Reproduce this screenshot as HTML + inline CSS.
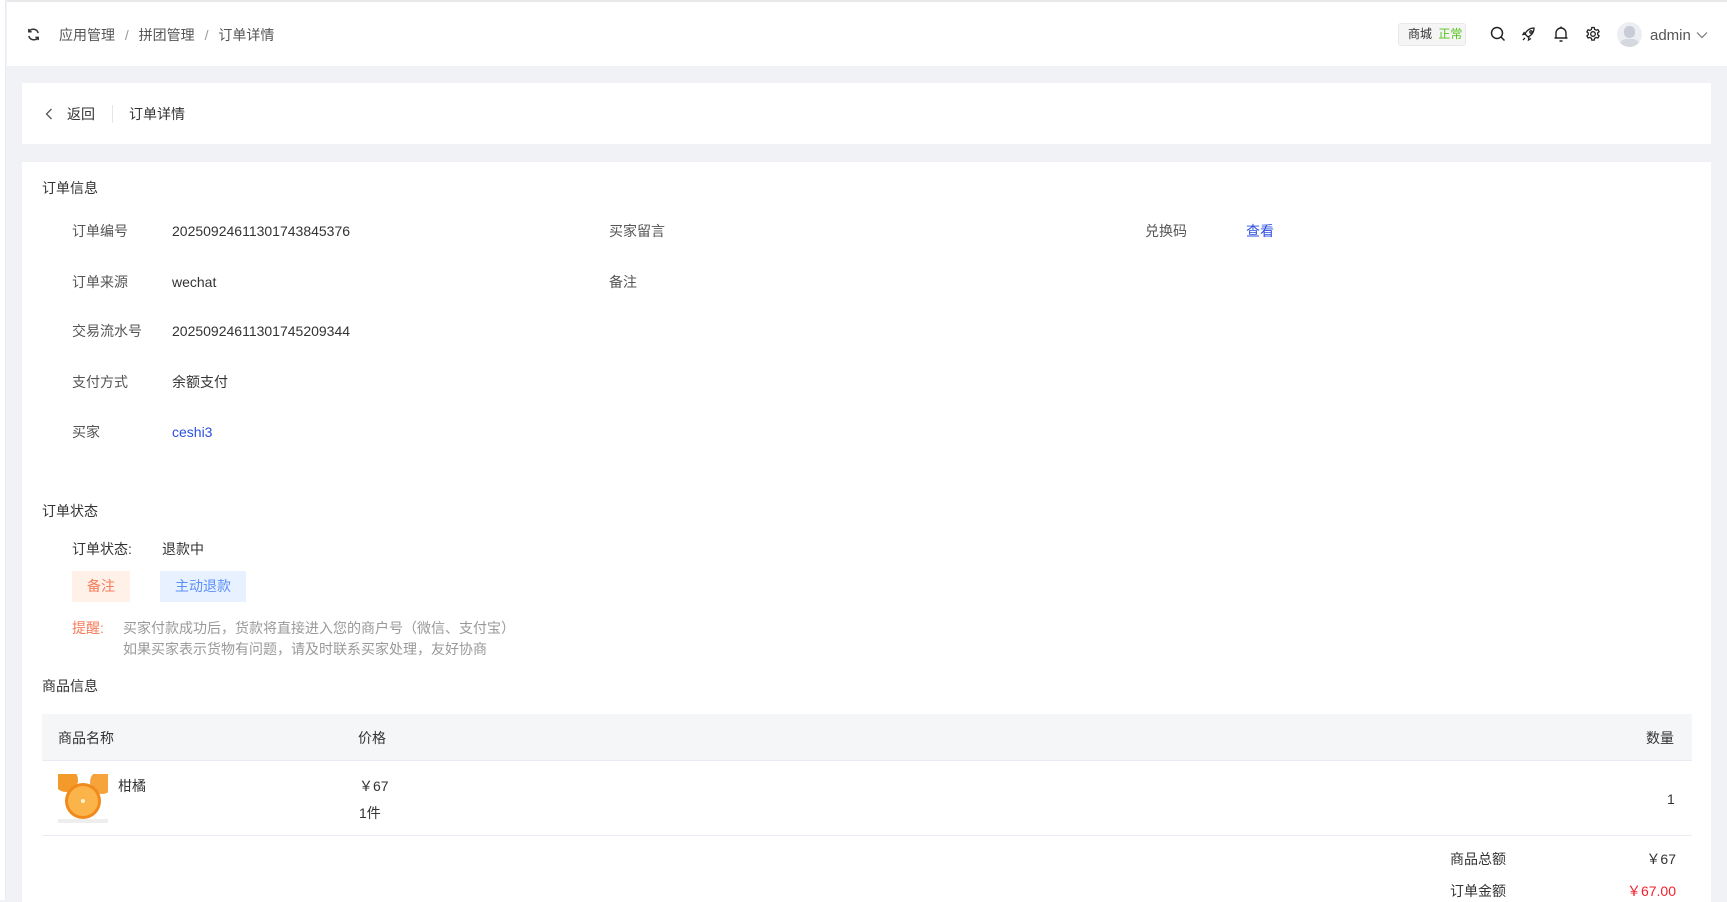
<!DOCTYPE html>
<html><head><meta charset="utf-8">
<style>
*{margin:0;padding:0;box-sizing:border-box}
body{width:1727px;height:900px;overflow:hidden;background:#f0f2f5;font-family:"Liberation Sans","Noto Sans CJK SC",sans-serif;font-size:14px;color:#333;position:relative}
.a{position:absolute;white-space:nowrap;line-height:1}
.leftstrip{position:absolute;left:0;top:0;width:6px;height:900px;background:#fff;border-right:1px solid #e6ebf5}
.top{position:absolute;left:7px;top:0;width:1720px;height:66px;background:#fff;border-top:2px solid #e8e8e8}
.p1{position:absolute;left:22px;top:83px;width:1689px;height:61px;background:#fff}
.p2{position:absolute;left:22px;top:162px;width:1689px;height:740px;background:#fff}
.lbl{color:#555}
.blue{color:#2b4fe0}
.m{position:absolute;left:0;top:1px;width:1727px;height:900px}
</style></head><body>
<div class="leftstrip"></div>
<div class="top"></div>
<svg class="a" style="left:26px;top:27px" width="15" height="15" viewBox="0 0 16 16" fill="none" stroke="#333" stroke-width="1.6"><path d="M13 6.5A5.5 5.5 0 0 0 3 5"/><path d="M3 2v3h3"/><path d="M3 9.5A5.5 5.5 0 0 0 13 11"/><path d="M13 14v-3h-3"/></svg>
<div class="a" style="left:59px;top:28px;color:#555">应用管理 <span style="color:#999;margin:0 6px">/</span> 拼团管理 <span style="color:#999;margin:0 6px">/</span> 订单详情</div>

<div class="a" style="left:1398px;top:23px;width:68px;height:23px;background:#f5f5f5;border:1px solid #e8e8e8;border-radius:3px;font-size:12px;line-height:21px;padding-left:9px">商城 <span style="color:#52c41a;margin-left:3px">正常</span></div>
<svg class="a" style="left:1490px;top:26px" width="16" height="16" viewBox="0 0 16 16" fill="none" stroke="#222" stroke-width="1.5"><circle cx="7" cy="7" r="5.5"/><path d="M11 11l3.5 3.5"/></svg>
<svg class="a" style="left:1521px;top:26px" width="16" height="16" viewBox="0 0 16 16" fill="none" stroke="#222" stroke-width="1.3"><path d="M6 10l-2-2c2-4 5-6 9-6 0 4-2 7-6 9z"/><circle cx="10" cy="6" r="1.2"/><path d="M5 8l-3 .5 1.5-2.5M8 11l-.5 3 2.5-1.5M4 12l-2 2"/></svg>
<svg class="a" style="left:1553px;top:25px" width="16" height="18" viewBox="0 0 16 18" fill="none" stroke="#222" stroke-width="1.4"><path d="M3 13V8a5 5 0 0 1 10 0v5H3zM1.5 13h13M6.5 16h3M8 1.5V3"/></svg>
<svg class="a" style="left:1585px;top:26px" width="16" height="16" viewBox="0 0 16 16" fill="none" stroke="#222" stroke-width="1.3"><circle cx="8" cy="8" r="2.3"/><path d="M6.8 1.5h2.4l.4 1.8 1.5.9 1.8-.6 1.2 2.1-1.4 1.2v1.8l1.4 1.2-1.2 2.1-1.8-.6-1.5.9-.4 1.8H6.8l-.4-1.8-1.5-.9-1.8.6-1.2-2.1 1.4-1.2V7.1L1.9 5.9l1.2-2.1 1.8.6 1.5-.9z"/></svg>
<div class="a" style="left:1617px;top:22px;width:25px;height:25px;border-radius:50%;background:#eceef4;overflow:hidden"><div style="position:absolute;left:7px;top:4px;width:11px;height:12px;border-radius:5px;background:#c9ccd6"></div><div style="position:absolute;left:3px;top:17px;width:19px;height:12px;border-radius:9px;background:#d6d8e0"></div></div>
<div class="a" style="left:1650px;top:28px;color:#555;font-size:15px">admin</div>
<svg class="a" style="left:1696px;top:31px" width="12" height="8" viewBox="0 0 12 8" fill="none" stroke="#777" stroke-width="1.2"><path d="M1 1.5l5 5 5-5"/></svg>

<div class="p1"></div>
<div class="m">
<svg class="a" style="left:45px;top:107px" width="8" height="12" viewBox="0 0 8 12" fill="none" stroke="#555" stroke-width="1.3"><path d="M6.5 1L1.5 6l5 5"/></svg>
<div class="a" style="left:67px;top:106px">返回</div>
<div class="a" style="left:112px;top:104px;width:1px;height:18px;background:#e5e5e5"></div>
<div class="a" style="left:129px;top:106px">订单详情</div>
</div>

<div class="p2"></div>
<div class="m">
<div class="a" style="left:42px;top:180px">订单信息</div>
<div class="a lbl" style="left:72px;top:223px">订单编号</div><div class="a" style="left:172px;top:223px">20250924611301743845376</div>
<div class="a lbl" style="left:72px;top:274px">订单来源</div><div class="a" style="left:172px;top:274px">wechat</div>
<div class="a lbl" style="left:72px;top:323px">交易流水号</div><div class="a" style="left:172px;top:323px">20250924611301745209344</div>
<div class="a lbl" style="left:72px;top:374px">支付方式</div><div class="a" style="left:172px;top:374px">余额支付</div>
<div class="a lbl" style="left:72px;top:424px">买家</div><div class="a blue" style="left:172px;top:424px">ceshi3</div>
<div class="a lbl" style="left:609px;top:223px">买家留言</div>
<div class="a lbl" style="left:609px;top:274px">备注</div>
<div class="a lbl" style="left:1145px;top:223px">兑换码</div><div class="a blue" style="left:1246px;top:223px">查看</div>

<div class="a" style="left:42px;top:503px">订单状态</div>
<div class="a" style="left:72px;top:541px">订单状态:</div><div class="a" style="left:162px;top:541px">退款中</div>
<div class="a" style="left:72px;top:570px;width:58px;height:31px;background:#fff0e8;color:#f57b5a;line-height:31px;text-align:center">备注</div>
<div class="a" style="left:160px;top:570px;width:86px;height:31px;background:#e8f1ff;color:#5b8ff9;line-height:31px;text-align:center">主动退款</div>
<div class="a" style="left:72px;top:620px;color:#f57b5a">提醒:</div>
<div class="a" style="left:123px;top:620px;color:#999">买家付款成功后，货款将直接进入您的商户号（微信、支付宝）</div>
<div class="a" style="left:123px;top:641px;color:#999">如果买家表示货物有问题，请及时联系买家处理，友好协商</div>

<div class="a" style="left:42px;top:678px">商品信息</div>
</div>
<div class="a" style="left:42px;top:714px;width:1650px;height:47px;background:#f5f6f8;border-bottom:1px solid #e8ebf2"></div>
<div class="m">
<div class="a" style="left:58px;top:730px">商品名称</div>
<div class="a" style="left:358px;top:730px">价格</div>
<div class="a" style="left:1646px;top:730px">数量</div>
</div>
<svg class="a" style="left:58px;top:774px" width="50" height="49" viewBox="0 0 50 49"><rect width="50" height="49" fill="#fff"/><circle cx="8" cy="6" r="12" fill="#f39a2a"/><circle cx="44" cy="8" r="12" fill="#f5a33a"/><circle cx="25" cy="27" r="18" fill="#f08a1c"/><circle cx="25" cy="27" r="15" fill="#fbb44a"/><circle cx="25" cy="27" r="2" fill="#fff3d6"/><rect y="45" width="50" height="4" fill="#eee"/></svg>
<div class="m">
<div class="a" style="left:118px;top:778px">柑橘</div>
<div class="a" style="left:359px;top:778px">￥67</div>
<div class="a" style="left:359px;top:805px">1件</div>
<div class="a" style="left:1667px;top:791px">1</div>
</div>
<div class="a" style="left:42px;top:835px;width:1650px;height:1px;background:#e8ebf2"></div>
<div class="m">
<div class="a" style="left:1450px;top:851px">商品总额</div><div class="a" style="left:1646px;top:851px;width:30px;text-align:right">￥67</div>
<div class="a" style="left:1450px;top:883px">订单金额</div><div class="a" style="left:1600px;top:883px;width:76px;text-align:right;color:#f5222d">￥67.00</div>
</div>
</body></html>
